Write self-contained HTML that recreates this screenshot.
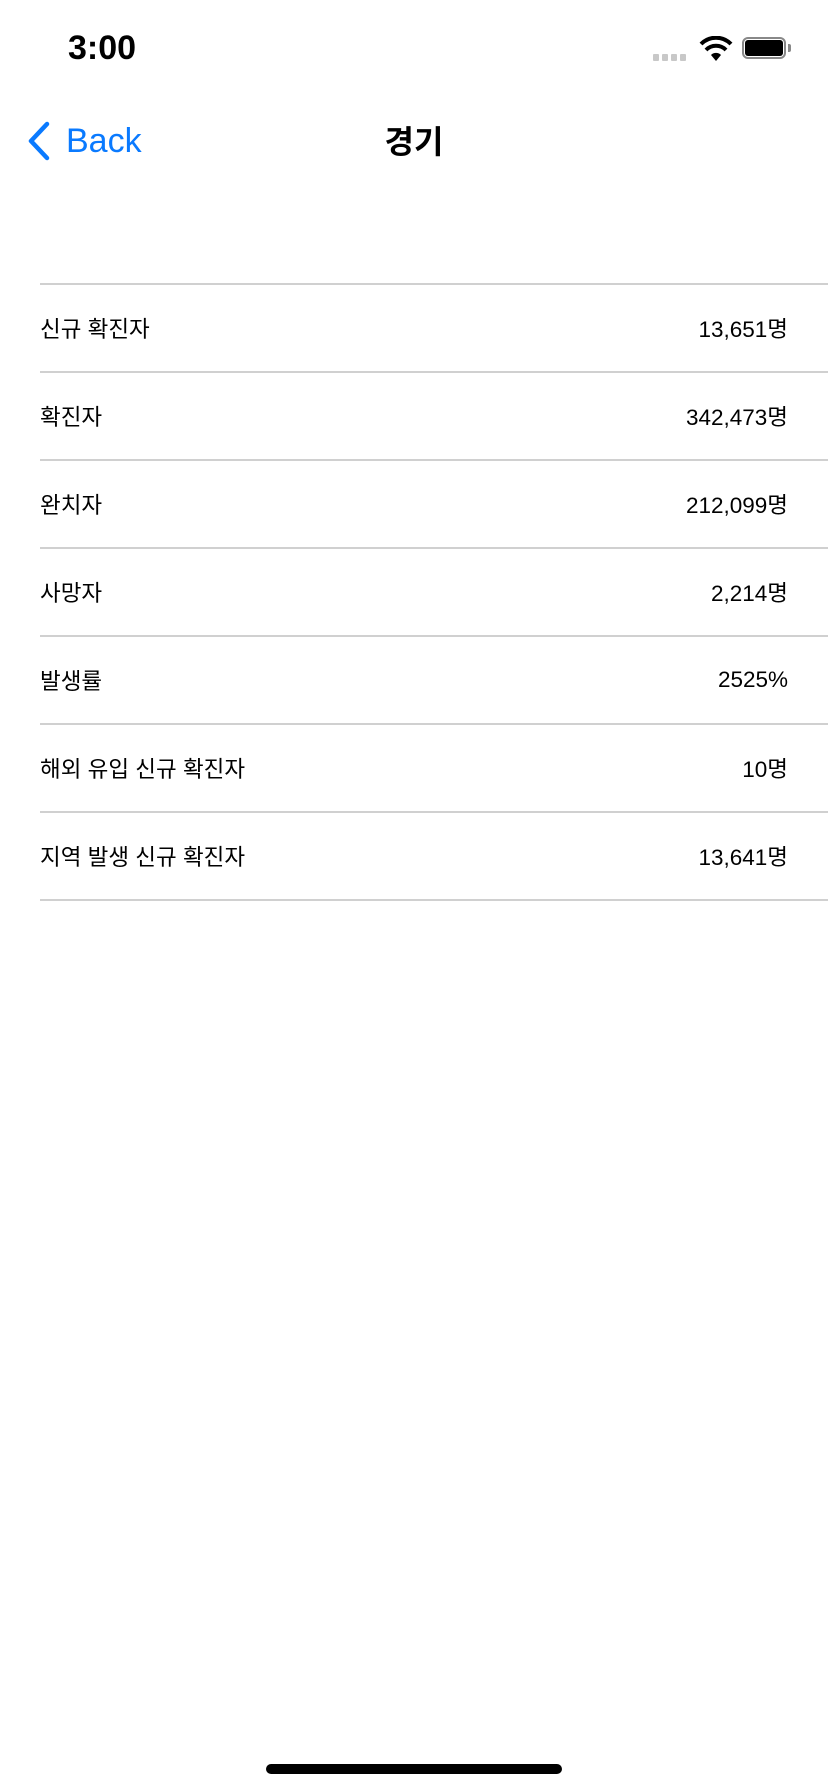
<!DOCTYPE html>
<html><head><meta charset="utf-8"><style>
body{margin:0;width:828px;height:1792px;background:#fff;position:relative;overflow:hidden;font-family:"Liberation Sans","Noto Sans CJK KR",sans-serif;}
.abs{position:absolute}
.row{position:absolute;left:40px;right:0;height:86px;border-bottom:2px solid #d0d0d0;font-size:22.5px;color:#000}
.row span{position:absolute;top:50%;transform:translateY(-50%)}
.row .v{right:40px}
</style></head><body>
<div class="abs" style="left:68px;top:29px;font-size:34px;font-weight:bold">3:00</div>
<div class="abs" style="left:653px;top:54px">
 <div class="abs" style="left:0;top:0;width:6px;height:7px;background:#c8c8c8;border-radius:1px"></div>
 <div class="abs" style="left:9px;top:0;width:6px;height:7px;background:#c8c8c8;border-radius:1px"></div>
 <div class="abs" style="left:18px;top:0;width:6px;height:7px;background:#c8c8c8;border-radius:1px"></div>
 <div class="abs" style="left:27px;top:0;width:6px;height:7px;background:#c8c8c8;border-radius:1px"></div>
</div>
<svg class="abs" style="left:699px;top:36px" width="34" height="26" viewBox="0 0 34 26"><path d="M17 25 L12 19 A7 7 0 0 1 22 19 Z" fill="#000"/><path d="M7 14 A14 14 0 0 1 27 14" stroke="#000" stroke-width="4" fill="none"/><path d="M2 8 A21 21 0 0 1 32 8" stroke="#000" stroke-width="4" fill="none"/></svg>
<div class="abs" style="left:742px;top:37px;width:44px;height:22px;border:2px solid #888;border-radius:6px;box-sizing:border-box"></div>
<div class="abs" style="left:745px;top:40px;width:38px;height:16px;background:#000;border-radius:3px"></div>
<div class="abs" style="left:788px;top:44px;width:3px;height:8px;background:#888;border-radius:0 2px 2px 0"></div>
<svg class="abs" style="left:25px;top:121px" width="26" height="40" viewBox="0 0 26 40"><path d="M22 3 L6 20 L22 37" stroke="#0a7aff" stroke-width="4.5" fill="none" stroke-linecap="round" stroke-linejoin="round"/></svg>
<div class="abs" style="left:66px;top:122px;font-size:34px;color:#0a7aff">Back</div>
<div class="abs" style="left:0;width:828px;top:117px;text-align:center;font-size:32px;font-weight:bold">경기</div>
<div class="abs" style="left:40px;right:0;top:283px;border-top:2px solid #d0d0d0"></div>
<div class="row" style="top:285px"><span>신규 확진자</span><span class="v">13,651명</span></div>
<div class="row" style="top:373px"><span>확진자</span><span class="v">342,473명</span></div>
<div class="row" style="top:461px"><span>완치자</span><span class="v">212,099명</span></div>
<div class="row" style="top:549px"><span>사망자</span><span class="v">2,214명</span></div>
<div class="row" style="top:637px"><span>발생률</span><span class="v">2525%</span></div>
<div class="row" style="top:725px"><span>해외 유입 신규 확진자</span><span class="v">10명</span></div>
<div class="row" style="top:813px"><span>지역 발생 신규 확진자</span><span class="v">13,641명</span></div>
<div class="abs" style="left:266px;top:1764px;width:296px;height:10px;background:#000;border-radius:5px"></div>
</body></html>
